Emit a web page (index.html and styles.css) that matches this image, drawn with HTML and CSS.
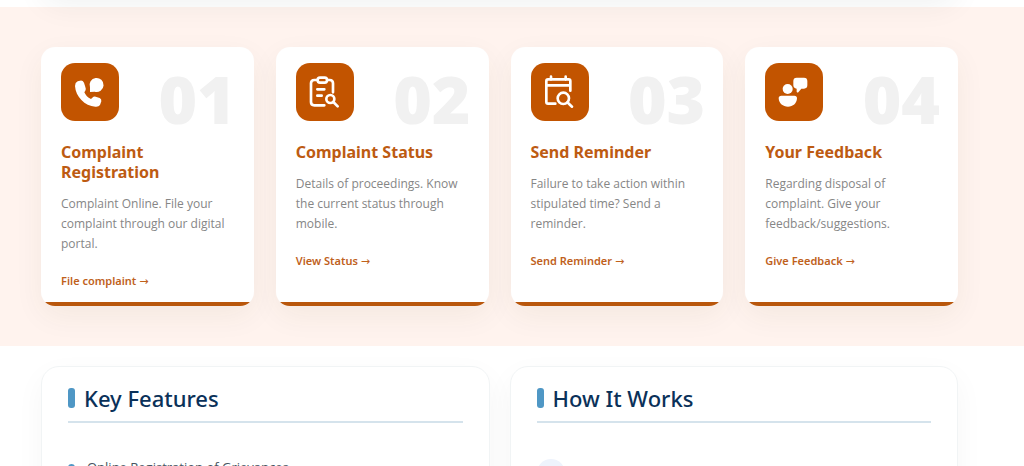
FILE: index.html
```html
<!DOCTYPE html>
<html lang="en">
<head>
<meta charset="utf-8">
<meta name="viewport" content="width=device-width, initial-scale=1">
<title>Complaint Services</title>
<link rel="stylesheet" href="styles.css">
</head>
<body>
<div class="intro"><div class="intro-panel"></div></div>
<section class="services">
  <article class="card">
    <div class="card-head">
      <span class="icon"><svg viewBox="0 0 174 174" aria-hidden="true"><path class="fill" d="M50 55Q42 59 42 69C44 101 71 129 103 131Q113 132 117 126L121 115Q122 108 116 105L104 101Q98 100 94 104L90 108C80 104 74 97 70 88L73 83Q76 79 73 72L69 59Q65 51 57 53Z"/><path class="fill" d="M87 87L87 73A21 21 0 1 1 101 86Z"/></svg></span>
      <span class="number">01</span>
    </div>
    <h3>Complaint Registration</h3>
    <p>Complaint Online. File your complaint through our digital portal.</p>
    <a href="#complaint">File complaint <span class="arrow">→</span></a>
  </article>
  <article class="card">
    <div class="card-head">
      <span class="icon"><svg viewBox="0 0 174 174" aria-hidden="true"><path class="line" d="M64 51H55Q45 51 45 61V117Q45 127 55 127H85M94 51H101Q111 51 111 61V88M64 79H85M64 98H77"/><rect class="line" x="65" y="44" width="28" height="15" rx="7"/><circle class="line" cx="103" cy="108" r="12"/><path class="line" d="M112 117L125 130"/></svg></span>
      <span class="number">02</span>
    </div>
    <h3>Complaint Status</h3>
    <p>Details of proceedings. Know the current status through mobile.</p>
    <a href="#status">View Status <span class="arrow">→</span></a>
  </article>
  <article class="card">
    <div class="card-head">
      <span class="icon"><svg viewBox="0 0 174 174" aria-hidden="true"><path class="line" d="M73 122H51Q46 122 46 117V54Q46 49 51 49H113Q118 49 118 54V83M46 67H118M60 41V50M104 41V50"/><circle class="line" cx="97" cy="106" r="17"/><path class="line" d="M109 118L123 131"/></svg></span>
      <span class="number">03</span>
    </div>
    <h3>Send Reminder</h3>
    <p>Failure to take action within stipulated time? Send a reminder.</p>
    <a href="#reminder">Send Reminder <span class="arrow">→</span></a>
  </article>
  <article class="card">
    <div class="card-head">
      <span class="icon"><svg viewBox="0 0 174 174" aria-hidden="true"><circle class="fill" cx="68" cy="78" r="15"/><path class="fill" d="M49 98H88Q96 98 96 106C95 122 84 131 69 131S42 122 41 106Q41 98 49 98ZM95 44H117Q127 44 127 54V67Q127 77 117 77H109L100 88Q97 90 95 86V77Q85 76 85 67V54Q85 44 95 44Z"/></svg></span>
      <span class="number">04</span>
    </div>
    <h3>Your Feedback</h3>
    <p>Regarding disposal of complaint. Give your feedback/suggestions.</p>
    <a href="#feedback">Give Feedback <span class="arrow">→</span></a>
  </article>
</section>
<section class="details">
  <article class="panel">
    <h2>Key Features</h2>
    <ul class="features"><li>Online Registration of Grievances</li></ul>
  </article>
  <article class="panel">
    <h2>How It Works</h2>
    <div class="step-badge"></div>
  </article>
</section>
</body>
</html>
```
FILE: styles.css
```css
* { box-sizing: border-box; }
body {
  margin: 0;
  background: #fff;
  font-family: "Open Sans", "Noto Sans", sans-serif;
  height: 100vh;
  overflow: hidden;
}
.intro {
  height: 7px;
  padding: 0 66px 0 41px;
  position: relative;
  display: flex;
}
.intro-panel {
  flex: 1;
  height: 100px;
  margin-top: -104px;
  border-radius: 20px;
  box-shadow: 0 10px 30px rgba(0, 50, 50, 0.06);
}
.services {
  background: #fff3ee;
  padding: 40px 66px 40px 41px;
  display: grid;
  grid-template-columns: repeat(4, 1fr);
  gap: 22px;
}
.card {
  background: linear-gradient(#b9570c, #b9570c) bottom / 100% 4px no-repeat #fff;
  border-radius: 14px;
  padding: 16px 18px 16px 20px;
  box-shadow: 0 10px 30px rgba(60, 60, 20, 0.06);
}
.card-head {
  display: flex;
  justify-content: space-between;
  height: 79px;
}
.icon {
  width: 58px;
  height: 58px;
  border-radius: 14px;
  background: #c25400;
}
.icon svg { display: block; }
.fill { fill: #fff; }
.line {
  fill: none;
  stroke: #fff;
  stroke-width: 8;
  stroke-linecap: round;
  stroke-linejoin: round;
}
.number {
  font-family: "Noto Sans", sans-serif;
  font-size: 66px;
  line-height: 70px;
  font-weight: 900;
  color: #f1f1f1;
}
h3 {
  margin: 0 0 12px;
  font-family: "Noto Sans", sans-serif;
  font-size: 16px;
  line-height: 20px;
  font-weight: 700;
  color: #bd5b12;
}
.card p {
  margin: 0 0 18px;
  font-size: 12px;
  line-height: 20px;
  color: #868686;
}
.card a {
  display: block;
  font-family: "Noto Sans", sans-serif;
  font-size: 11px;
  line-height: 18px;
  font-weight: 600;
  color: #c0611c;
  text-decoration: none;
}
.arrow {
  font-family: "DejaVu Sans", sans-serif;
  font-weight: 400;
  line-height: 1;
}
.details {
  padding: 20px 66px 20px 41px;
  display: grid;
  grid-template-columns: 1fr 1fr;
  gap: 20px;
}
.panel {
  border: 1px solid #f1f4f5;
  border-radius: 18px;
  padding: 16px 26px 26px;
  box-shadow: 0 10px 30px rgba(0, 40, 60, 0.04);
}
h2 {
  display: flex;
  align-items: center;
  gap: 9px;
  margin: 0 0 36px;
  padding-bottom: 8px;
  border-bottom: 2px solid #d5e3ec;
  font-family: "Noto Sans", sans-serif;
  font-size: 22px;
  line-height: 30px;
  font-weight: 500;
  color: #0a3159;
}
h2::before {
  content: "";
  width: 7px;
  height: 20px;
  border-radius: 3px;
  background: #4f97c5;
}
.features {
  margin: 0;
  padding: 0;
  list-style: none;
  font-size: 13px;
  line-height: 16px;
  color: #465461;
}
.features li {
  display: flex;
  align-items: center;
  gap: 12px;
}
.features li::before {
  content: "";
  width: 7px;
  height: 7px;
  border-radius: 50%;
  background: #4f97c5;
}
.step-badge {
  width: 28px;
  height: 28px;
  border-radius: 50%;
  background: #eef3fc;
}
```
